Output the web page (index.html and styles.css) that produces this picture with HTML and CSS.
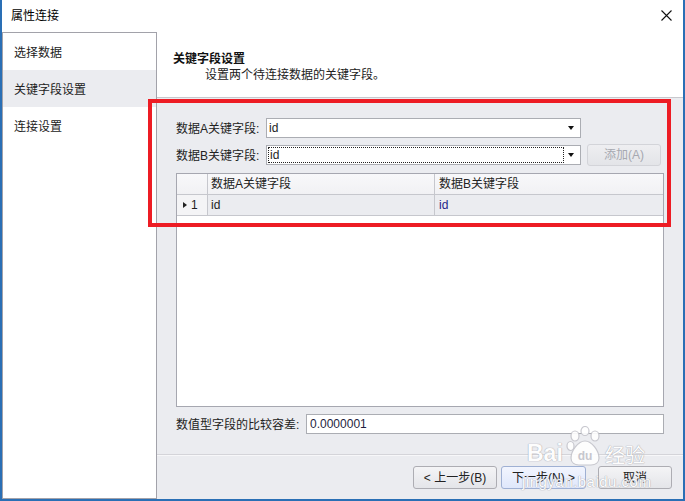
FILE: index.html
```html
<!DOCTYPE html>
<html lang="zh-CN">
<head>
<meta charset="utf-8">
<title>属性连接</title>
<link rel="stylesheet" href="styles.css">
</head>
<body>
<div class="window">
  <div class="titlebar">
    <span class="title">属性连接</span>
    <svg class="close" width="11" height="11" viewBox="0 0 11 11"><path d="M0.5 0.5L10.5 10.5M10.5 0.5L0.5 10.5" stroke="#111" stroke-width="1.1" fill="none"/></svg>
  </div>
  <div class="body">
    <nav class="sidebar">
      <div class="nav-item">选择数据</div>
      <div class="nav-item active">关键字段设置</div>
      <div class="nav-item">连接设置</div>
    </nav>
    <main class="page">
      <header class="page-head">
        <div class="head-title">关键字段设置</div>
        <div class="head-sub">设置两个待连接数据的关键字段。</div>
      </header>
      <section class="page-body">
        <div class="form-row">
          <label class="lbl">数据A关键字段:</label>
          <div class="combo"><span class="combo-text">id</span><span class="combo-arrow"></span></div>
        </div>
        <div class="form-row row-b">
          <label class="lbl">数据B关键字段:</label>
          <div class="combo"><span class="combo-text focus">id</span><span class="combo-arrow"></span></div>
          <button class="btn btn-add" disabled>添加(A)</button>
        </div>
        <div class="grid">
          <div class="gh gh-corner"></div>
          <div class="gh">数据A关键字段</div>
          <div class="gh gh-b">数据B关键字段</div>
          <div class="gr gr-head"><span class="row-tri"></span>1</div>
          <div class="gr">id</div>
          <div class="gr gr-b">id</div>
        </div>
        <div class="tol-row">
          <label class="lbl lbl-tol">数值型字段的比较容差:</label>
          <div class="textbox">0.0000001</div>
        </div>
      </section>
      <footer class="page-foot">
        <button class="btn btn-prev">&lt; 上一步(B)</button>
        <button class="btn btn-next">下一步(N) &gt;</button>
        <button class="btn btn-cancel">取消</button>
      </footer>
    </main>
  </div>
  <div class="annot"></div>
  <div class="watermark">
    <span class="wm-bai">Bai</span>
    <svg class="wm-paw" width="38" height="40" viewBox="0 0 38 40">
      <g fill="#fff" stroke="#c4c4cb" stroke-width="1.2">
        <ellipse cx="9" cy="10" rx="4" ry="5"/>
        <ellipse cx="19" cy="5" rx="4" ry="4.5"/>
        <ellipse cx="29" cy="10" rx="4" ry="5"/>
        <ellipse cx="4.5" cy="20" rx="3.5" ry="4.5"/>
        <path d="M19 15c-7 0-14 10-14 17 0 5 4 7 8 7h12c4 0 8-2 8-7 0-7-7-17-14-17z"/>
      </g>
      <text x="19" y="34" text-anchor="middle" class="wm-du">du</text>
    </svg>
    <span class="wm-jy">经验</span>
    <span class="wm-url">jingyan.baidu.com</span>
  </div>
</div>
</body>
</html>
```
FILE: styles.css
```css
* { box-sizing: border-box; }
html, body { margin: 0; padding: 0; }
body {
  width: 685px;
  height: 501px;
  overflow: hidden;
  font-family: "Liberation Sans", "Noto Sans CJK SC", sans-serif;
  font-size: 12px;
  color: #1e1e1e;
  background: #fff;
}
.window {
  position: relative;
  width: 685px;
  height: 501px;
  display: flex;
  flex-direction: column;
  border: 2px solid #2a6fb5;
  border-top: 0;
  background: #ebecf0;
}
.titlebar {
  height: 32px;
  flex: none;
  background: #fff;
  display: flex;
  align-items: center;
  justify-content: space-between;
  padding: 0 10px 1px 9px;
}
.title { font-size: 12px; line-height: 16px; color: #000; }
.close { margin-right: 1px; }
.body {
  flex: 1;
  display: flex;
  min-height: 0;
}
.sidebar {
  width: 155px;
  flex: none;
  background: #fff;
  border: 1px solid #a2a2aa;
}
.nav-item {
  height: 37px;
  line-height: 37px;
  padding: 2px 0 0 11px;
  color: #222;
}
.nav-item.active { background: #ebecf0; }
.page {
  flex: 1;
  display: flex;
  flex-direction: column;
  min-width: 0;
}
.page-head {
  height: 66px;
  flex: none;
  background: #fff;
  border-bottom: 1px solid #c8c8cd;
  padding: 19px 0 0 16px;
}
.head-title { font-weight: bold; line-height: 16px; color: #111; }
.head-sub { line-height: 16px; padding-left: 32px; color: #222; }
.page-body {
  flex: 1;
  padding: 20px 19px 0 19px;
  display: flex;
  flex-direction: column;
}
.form-row {
  display: flex;
  align-items: center;
  height: 20px;
}
.row-b { margin-top: 7px; }
.lbl { width: 90px; flex: none; color: #222; line-height: 16px; padding-top: 2px; }
.combo {
  width: 315px;
  height: 20px;
  background: #fff;
  border: 1px solid #abadb3;
  display: flex;
  align-items: stretch;
}
.combo-text {
  flex: 1;
  padding-left: 2px;
  line-height: 19px;
  color: #1e1e1e;
}
.combo-text.focus {
  margin: 1px 0 1px 1px;
  padding-left: 1px;
  line-height: 15px;
  border: 1px dotted #222;
}
.combo-arrow {
  width: 16px;
  flex: none;
  position: relative;
}
.combo-arrow::after {
  content: "";
  position: absolute;
  left: 4px;
  top: 7px;
  border-left: 3.5px solid transparent;
  border-right: 3.5px solid transparent;
  border-top: 4px solid #111;
}
.btn {
  font-family: "Liberation Sans", "Noto Sans CJK SC", sans-serif;
  font-size: 12px;
  line-height: 16px;
  height: 23px;
  padding: 0;
  border: 1px solid #adadb3;
  border-radius: 3px;
  background: linear-gradient(#f4f4f6, #e4e5e9);
  color: #222;
}
.btn-add {
  margin-left: 6px;
  width: 74px;
  height: 22px;
  color: #a6a8b0;
  border-color: #d3d4d9;
  background: linear-gradient(#eeeef1, #e3e4e8);
}
.grid {
  margin-top: 8px;
  height: 234px;
  flex: none;
  background: #fff;
  border: 1px solid #a6a7b0;
  display: grid;
  grid-template-columns: 31px 227px 1fr;
  grid-template-rows: 21px 21px;
  align-content: start;
}
.gh, .gr {
  border-right: 1px solid #c6c7cd;
  border-bottom: 1px solid #c6c7cd;
  line-height: 20px;
  padding-left: 3px;
  white-space: nowrap;
}
.gh { background: linear-gradient(#f8f8fa, #f1f1f4); color: #222; }
.gh-b, .gr-b { border-right: 0; padding-left: 4px; }
.gr { background: #ebecf0; }
.gr-head {
  background: #f4f4f6;
  padding-left: 6px;
  display: flex;
  align-items: center;
  gap: 4px;
}
.row-tri {
  width: 0; height: 0;
  border-top: 3.5px solid transparent;
  border-bottom: 3.5px solid transparent;
  border-left: 4px solid #222;
}
.gr-b { color: #24248a; }
.tol-row {
  margin-top: 7px;
  display: flex;
  align-items: center;
  height: 20px;
}
.lbl-tol { width: 130px; }
.textbox {
  flex: 1;
  height: 20px;
  background: #fff;
  border: 1px solid #abadb3;
  line-height: 18px;
  padding-left: 3px;
  color: #1e1e40;
}
.page-foot {
  height: 45px;
  flex: none;
  border-top: 1px solid #d4d4d9;
  box-shadow: inset 0 1px 0 #f7f7f9;
  padding: 11px 11px 0 0;
  display: flex;
  justify-content: flex-end;
  align-items: flex-start;
}
.btn-prev { width: 84px; }
.btn-next {
  width: 85px;
  margin-left: 4px;
  border-color: #9fb0d3;
  background: linear-gradient(#f2f5fe, #dfe7fb);
}
.btn-cancel { width: 74px; margin-left: 12px; }
.annot {
  position: absolute;
  left: 146px;
  top: 99px;
  width: 523px;
  height: 128px;
  border: 4px solid #ed1c24;
  pointer-events: none;
}
.watermark {
  position: absolute;
  left: 525px;
  top: 426px;
  width: 140px;
  height: 70px;
  pointer-events: none;
  opacity: 0.9;
}
.wm-bai, .wm-jy, .wm-url {
  position: absolute;
  color: #fff;
  text-shadow: 0 0 1px #a2a2aa, 0 0 1px #a2a2aa;
  white-space: nowrap;
}
.wm-bai {
  left: 0; top: 14px;
  font-family: "Liberation Sans", sans-serif;
  font-weight: bold;
  font-size: 23px;
  line-height: 26px;
}
.wm-paw { position: absolute; left: 39px; top: 0; }
.wm-du { font-family: "Liberation Sans", sans-serif; font-weight: bold; font-size: 12px; fill: #c4c4cb; }
.wm-jy {
  left: 78px; top: 17px;
  font-family: "Noto Sans CJK SC", sans-serif;
  font-size: 20px;
  line-height: 24px;
}
.wm-url {
  left: -5px; top: 47px;
  font-family: "Liberation Sans", sans-serif;
  font-size: 15px;
  line-height: 18px;
  letter-spacing: 0.5px;
}
```
